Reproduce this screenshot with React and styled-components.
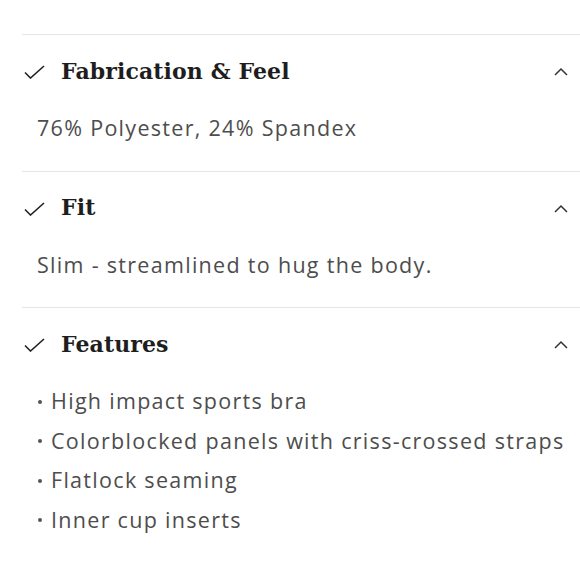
import React from "react";
import styled, { createGlobalStyle } from "styled-components";

const Global = createGlobalStyle`
  html, body { margin: 0; padding: 0; background: #fff; }
  body { -webkit-font-smoothing: antialiased; }
`;

const Page = styled.div`
  padding: 34px 0 0 22px;
  width: 580px;
  box-sizing: border-box;
  overflow: hidden;
`;

const Section = styled.section`
  border-top: 1px solid #e6e6e6;
  padding-bottom: 23px;
`;

const Header = styled.div`
  height: 73px;
  display: flex;
  align-items: center;
  padding-right: 12px;
`;

const Check = styled.svg`
  width: 21px;
  height: 14px;
  flex: none;
  margin: 1px 16px 0 2px;
`;

const Title = styled.h3`
  margin: 0 0 2px;
  flex: 1;
  font-family: "DejaVu Serif", "Liberation Serif", serif;
  font-weight: 700;
  font-size: 22px;
  color: #1e1e1e;
  letter-spacing: 0.1px;
`;

const Chevron = styled.svg`
  width: 14px;
  height: 9px;
  flex: none;
`;

const textStyle = `
  font-family: "Open Sans", Lato, sans-serif;
  font-size: 21.5px;
  line-height: 39.5px;
  letter-spacing: 1.3px;
  color: #4d4d4d;
`;

const Body = styled.div`
  padding-left: 15px;
  ${textStyle}
`;

const List = styled.ul`
  margin: 0;
  padding: 0 0 0 15px;
  list-style: none;
  ${textStyle}
`;

const Item = styled.li`
  display: flex;
  align-items: center;
  white-space: nowrap;
`;

const Dot = styled.span`
  width: 4px;
  height: 4px;
  border-radius: 50%;
  background: #555;
  margin: 2px 9px 0 1px;
  flex: none;
`;

const CheckIcon = () => (
  <Check viewBox="0 0 21 14">
    <path d="M1 7.5 L6.5 13 L20 1" fill="none" stroke="#222" strokeWidth="1.6" />
  </Check>
);

const ChevronIcon = () => (
  <Chevron viewBox="0 0 14 9">
    <path d="M1 8 L7 2 L13 8" fill="none" stroke="#333" strokeWidth="1.5" />
  </Chevron>
);

const Accordion = ({ title, children }) => (
  <Section>
    <Header>
      <CheckIcon />
      <Title>{title}</Title>
      <ChevronIcon />
    </Header>
    {children}
  </Section>
);

export default function App() {
  const features = [
    "High impact sports bra",
    "Colorblocked panels with criss-crossed straps",
    "Flatlock seaming",
    "Inner cup inserts",
  ];
  return (
    <>
      <Global />
      <Page>
        <Accordion title="Fabrication & Feel">
          <Body>76% Polyester, 24% Spandex</Body>
        </Accordion>
        <Accordion title="Fit">
          <Body>Slim - streamlined to hug the body.</Body>
        </Accordion>
        <Accordion title="Features">
          <List>
            {features.map((f) => (
              <Item key={f}>
                <Dot />
                {f}
              </Item>
            ))}
          </List>
        </Accordion>
      </Page>
    </>
  );
}
